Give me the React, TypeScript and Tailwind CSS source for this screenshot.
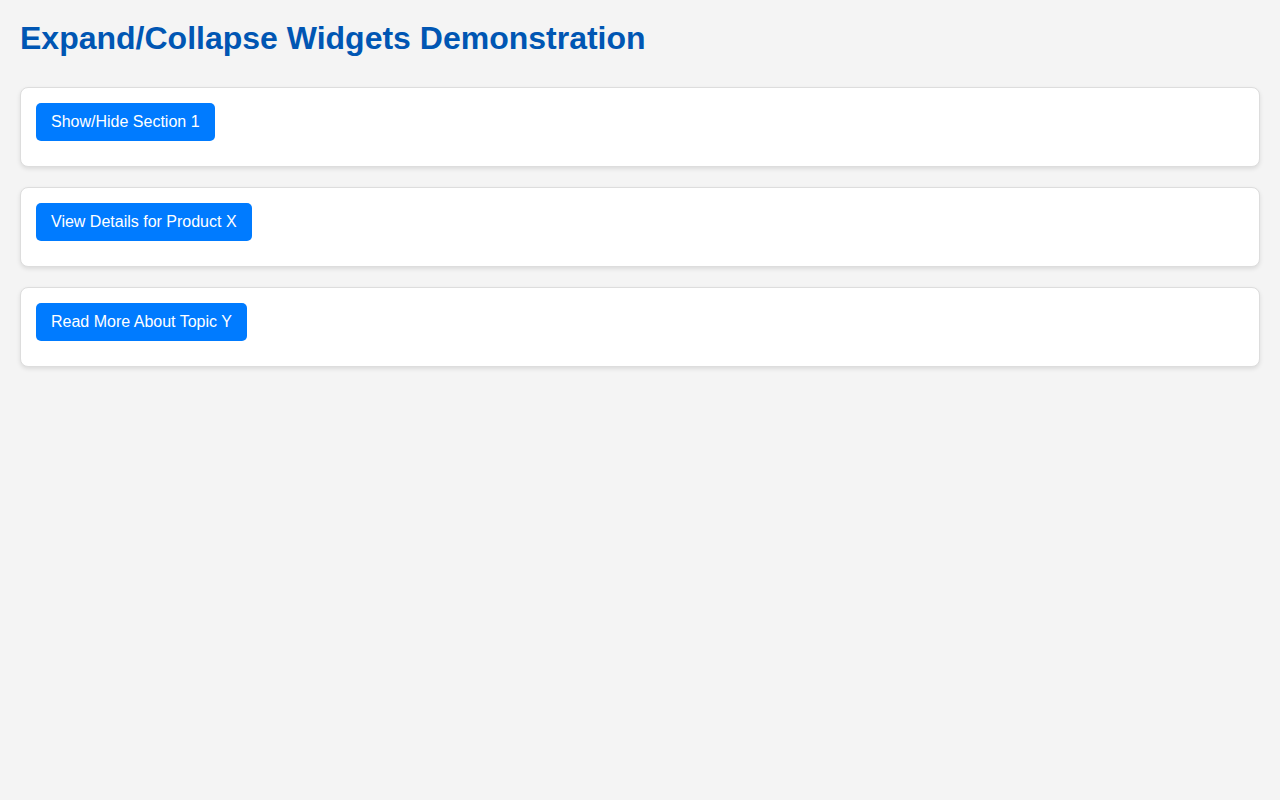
import { useState } from "react";

const widgets = [
  {
    label: "Show/Hide Section 1",
    content: "This is the hidden content for Section 1.",
  },
  {
    label: "View Details for Product X",
    content: "Product X details go here.",
  },
  {
    label: "Read More About Topic Y",
    content: "More information about Topic Y.",
  },
];

function Widget({ label, content }: { label: string; content: string }) {
  const [open, setOpen] = useState(false);

  return (
    <div className="bg-white border border-[#ddd] rounded-lg p-[15px] mb-5 shadow-[0_2px_4px_rgba(0,0,0,0.1)]">
      <button
        onClick={() => setOpen(!open)}
        className="bg-[#007bff] hover:bg-[#0056b3] text-white text-base leading-[18px] px-[15px] py-[10px] rounded-[5px] cursor-pointer"
      >
        {label}
      </button>
      <div className="mt-[10px]">
        {open && <p className="text-[#333]">{content}</p>}
      </div>
    </div>
  );
}

export default function App() {
  return (
    <div
      className="min-h-screen bg-[#f4f4f4] p-5 text-[#333]"
      style={{ fontFamily: '"Liberation Sans", Arial, sans-serif' }}
    >
      <h1 className="text-[32px] font-bold leading-[37px] text-[#0056b3] mb-[30px]">
        Expand/Collapse Widgets Demonstration
      </h1>

      {widgets.map((w) => (
        <Widget key={w.label} label={w.label} content={w.content} />
      ))}
    </div>
  );
}
